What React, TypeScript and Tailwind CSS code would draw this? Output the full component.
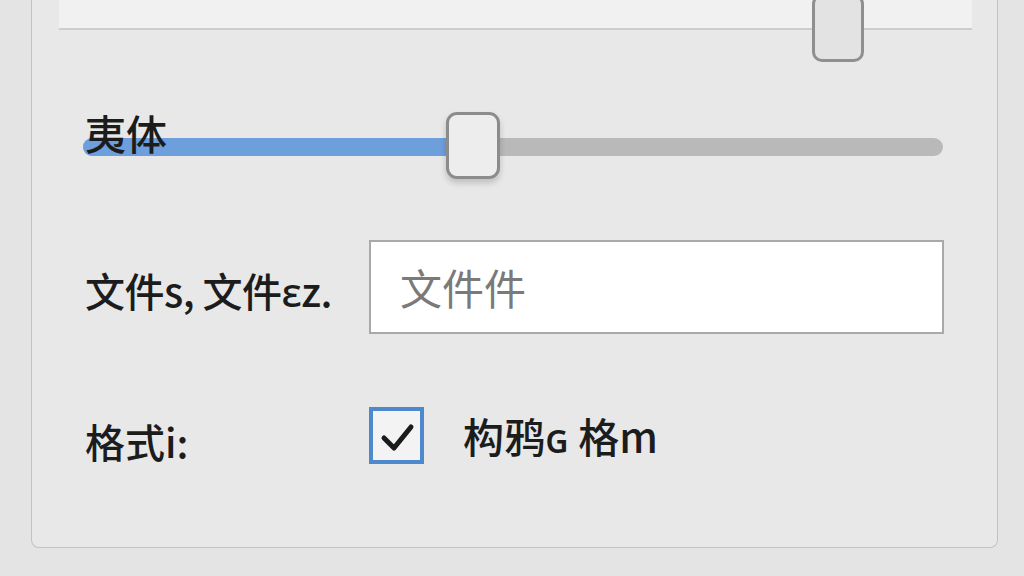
import React from "react";

const font = { fontFamily: '"Noto Sans CJK SC", "Noto Sans", sans-serif' };

function Slider({ label, value }: { label: string; value: number }) {
  return (
    <div className="relative mt-[81px] ml-[51px] w-[860px] h-[68px] flex items-center">
      <div className="mt-[4px] w-full h-[18px] rounded-full bg-[#b9b9b9] overflow-hidden">
        <div className="h-full bg-[#6d9fdc]" style={{ width: `${value}%` }} />
      </div>
      {/* label sits over the start of the track */}
      <span className="absolute left-[2px] top-[-3px] text-[41px] leading-[48px] font-medium text-[#1c1c1c]">
        {label}
      </span>
      <div
        className="absolute top-[1px] w-[54px] h-[67px] rounded-[11px] border-[3px] border-[#8c8c8c] bg-[#ededed] shadow-[0_4px_6px_rgba(0,0,0,0.18)]"
        style={{ left: `calc(${value}% - 27px)` }}
      />
    </div>
  );
}

export default function App() {
  return (
    <div className="h-[576px] overflow-hidden bg-[#e4e4e4]" style={font}>
      <div className="relative ml-[31px] w-[967px] h-[548px] border border-t-0 border-[#c2c2c2] rounded-b-[8px] bg-[#e8e8e8]">
        {/* lighter pane above */}
        <div className="ml-[27px] mr-[25px] h-[30px] bg-[#f1f1f1] border-b-2 border-[#cdcdcd]" />
        <div className="absolute left-[780px] top-[-6px] w-[52px] h-[68px] rounded-[10px] border-[3px] border-[#8f8f8f] bg-[#e3e3e3]" />

        <Slider label="夷体" value={45.3} />

        <div className="mt-[61px] ml-[53px] flex items-center">
          <span className="w-[284px] text-[40px] leading-[48px] font-medium tracking-[-0.5px] text-[#1c1c1c] mt-[6px]">文件s, 文件ɛz.</span>
          <div className="w-[575px] h-[94px] bg-white border-2 border-[#a9a9a9] flex items-center pl-[29px]">
            <span className="text-[42px] leading-[48px] text-[#7a7a7a]">文件件</span>
          </div>
        </div>

        <div className="mt-[73px] ml-[53px] flex items-start">
          <span className="w-[284px] mt-[10px] text-[40px] leading-[48px] font-medium text-[#1c1c1c]">格式i:</span>
          <div className="w-[55px] h-[57px] border-[4px] border-[#4d89cc] bg-[#f3f3f3] flex items-center justify-center">
            <svg width="47" height="49" viewBox="0 0 47 49" fill="none">
              <path d="M11 27 L21 37 L38 16" stroke="#1a1a1a" strokeWidth="5" strokeLinecap="round" strokeLinejoin="round" />
            </svg>
          </div>
          <span className="ml-[39px] mt-[4px] text-[41px] leading-[48px] font-medium text-[#1c1c1c]">构鸦ɢ 格m</span>
        </div>
      </div>
    </div>
  );
}
